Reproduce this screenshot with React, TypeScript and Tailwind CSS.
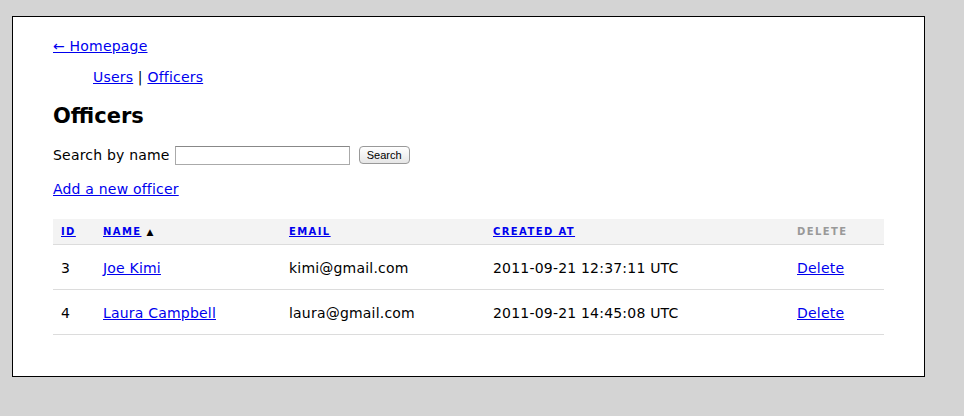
const officers = [
  { id: 3, name: "Joe Kimi", email: "kimi@gmail.com", created: "2011-09-21 12:37:11 UTC" },
  { id: 4, name: "Laura Campbell", email: "laura@gmail.com", created: "2011-09-21 14:45:08 UTC" },
];

const link = "text-[#0000ee] underline";
const th = "text-left font-bold uppercase text-[10px] tracking-[1.4px] px-2 h-[25px] align-middle";
const td = "px-2 pt-1";

const App = () => {
  return (
    <div className="w-[964px] h-[416px] bg-[#d4d4d4] pt-4 pl-3 font-['DejaVu_Sans',Verdana,sans-serif] text-[14px] tracking-[0.2px] text-black">
      <div className="w-[913px] h-[361px] bg-white border border-black pl-10 pt-[19px]">
        <a href="#" className={link}>← Homepage</a>
        <div className="mt-[10px] pl-10">
          <a href="#" className={link}>Users</a> | <a href="#" className={link}>Officers</a>
        </div>
        <h1 className="mt-[14px] text-[21px] font-bold leading-[28px] tracking-normal">Officers</h1>
        <div className="mt-[15px] flex items-center h-[20px]">
          <span>Search by name</span>
          <input type="text" className="ml-[5px] w-[175px] h-[19px] border border-[#aaa] border-t-[#888] bg-white" />
          <button className="ml-[9px] h-[18px] px-[7px] text-[11px] tracking-normal font-['Liberation_Sans',Arial,sans-serif] border border-[#999] rounded-[4px] bg-gradient-to-b from-white to-[#e6e6e6]">Search</button>
        </div>
        <div className="mt-[14px]">
          <a href="#" className={link}>Add a new officer</a>
        </div>
        <table className="mt-[19px] w-[831px] border-collapse table-fixed">
          <colgroup>
            <col className="w-[42px]" />
            <col className="w-[186px]" />
            <col className="w-[204px]" />
            <col className="w-[304px]" />
            <col className="w-[95px]" />
          </colgroup>
          <thead>
            <tr className="bg-[#f3f3f3] border-b border-[#dcdcdc]">
              <th className={th}><a href="#" className={link}>Id</a></th>
              <th className={th}>
                <a href="#" className={link}>Name</a> <span className="text-[9px]">▲</span>
              </th>
              <th className={th}><a href="#" className={link}>Email</a></th>
              <th className={th}><a href="#" className={link}>Created at</a></th>
              <th className={th + " text-[#999]"}>Delete</th>
            </tr>
          </thead>
          <tbody>
            {officers.map((o) => (
              <tr key={o.id} className="border-b border-[#dcdcdc] h-[45px]">
                <td className={td}>{o.id}</td>
                <td className={td}><a href="#" className={link}>{o.name}</a></td>
                <td className={td}>{o.email}</td>
                <td className={td}>{o.created}</td>
                <td className={td}><a href="#" className={link}>Delete</a></td>
              </tr>
            ))}
          </tbody>
        </table>
      </div>
    </div>
  );
};

export default App;
